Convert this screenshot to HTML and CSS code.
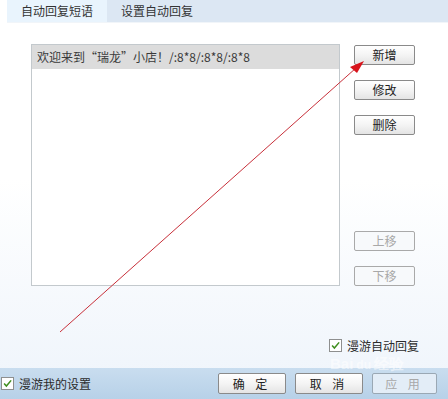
FILE: index.html
```html
<!DOCTYPE html>
<html lang="zh">
<head>
    <meta charset="UTF-8">
    <title>自动回复设置</title>
    <link rel="stylesheet" href="styles.css">
</head>
<body>
    <div class="window">
        <div class="tabs">
            <div class="tab active">自动回复短语</div>
            <div class="tab">设置自动回复</div>
        </div>

        <div class="content">
            <div class="panel">
                <div class="phrase-list">
                    <div class="phrase selected">欢迎来到“瑞龙”小店！/:8*8/:8*8/:8*8</div>
                </div>
                <div class="side-buttons">
                    <button class="btn">新增</button>
                    <button class="btn">修改</button>
                    <button class="btn">删除</button>
                    <button class="btn move-up" disabled>上移</button>
                    <button class="btn" disabled>下移</button>
                </div>
            </div>
            <label class="check roam-reply">
                <span class="box"><svg viewBox="0 0 13 13" width="13" height="13"><path d="M2.5 6.5 L5.2 9.5 L10.8 2.8" fill="none" stroke="#3f8f1f" stroke-width="1.8"/></svg></span>
                漫游自动回复
            </label>
        </div>

        <div class="footer">
            <label class="check">
                <span class="box"><svg viewBox="0 0 13 13" width="13" height="13"><path d="M2.5 6.5 L5.2 9.5 L10.8 2.8" fill="none" stroke="#3f8f1f" stroke-width="1.8"/></svg></span>
                漫游我的设置
            </label>
            <div class="footer-buttons">
                <button class="btn wide">确 定</button>
                <button class="btn wide">取 消</button>
                <button class="btn wide" disabled>应 用</button>
            </div>
        </div>

        <!-- annotation arrow drawn over the dialog -->
        <svg class="arrow" width="448" height="399" viewBox="0 0 448 399">
            <line x1="60" y1="332" x2="356" y2="68" stroke="#c8303a" stroke-width="1"/>
            <path d="M364 61 L350 67 L357 73 Z" fill="#d8141c"/>
        </svg>
        <div class="watermark">Bai<span class="du">du</span>经验</div>
    </div>
</body>
</html>
```

FILE: styles.css
```css
body {
    margin: 0;
    font-family: "Noto Sans CJK SC", "Noto Sans", sans-serif;
    font-size: 12px;
    color: #2b2b2b;
}

.window {
    position: relative;
    width: 448px;
    height: 399px;
    overflow: hidden;
    display: flex;
    flex-direction: column;
    background: linear-gradient(#ffffff 0%, #ffffff 45%, #eef4fb 100%);
}

.tabs {
    display: flex;
    height: 22px;
    margin-left: 7px;
    background: #dce7f3;
    border-bottom: 1px solid #f1f5f9;
}

.tab {
    line-height: 22px;
    padding: 0 14px;
    color: #333;
}

.tab.active {
    width: 72px;
    background: #e9f4fd;
}

.content {
    flex: 1;
    display: flex;
    flex-direction: column;
    padding: 21px 0 0 31px;
}

.panel {
    display: flex;
    gap: 14px;
}

.phrase-list {
    width: 307px;
    height: 240px;
    border: 1px solid #c3c9cd;
    background: #fff;
}

.phrase {
    height: 24px;
    line-height: 24px;
    padding-left: 5px;
    color: #3a3a3a;
}

.phrase.selected {
    background: #dcdcdc;
}

.side-buttons {
    display: flex;
    flex-direction: column;
    gap: 15px;
    padding-top: 1px;
}

.side-buttons .move-up {
    margin-top: 81px;
}

.btn {
    box-sizing: border-box;
    width: 61px;
    height: 20px;
    padding: 0;
    font-family: inherit;
    font-size: 12px;
    line-height: 18px;
    color: #222;
    border: 1px solid #8a8a8a;
    border-radius: 2px;
    background: linear-gradient(#ffffff 0%, #f4f4f4 50%, #e4e4e4 100%);
}

.btn:disabled {
    color: #a8a8a8;
    border-color: #a9a9a9;
    background: #f7f9fb;
}

.check {
    display: flex;
    align-items: center;
    gap: 5px;
    font-size: 12px;
    line-height: 13px;
}

.box {
    width: 11px;
    height: 11px;
    border: 1px solid #8e8f8f;
    background: #fff;
    display: flex;
    align-items: center;
    justify-content: center;
}

.roam-reply {
    align-self: flex-end;
    margin: 53px 29px 0 0;
}

.footer {
    height: 31px;
    flex-shrink: 0;
    display: flex;
    align-items: center;
    justify-content: space-between;
    padding-left: 1px;
    background: linear-gradient(#c9ddef, #b7d1e8);
}

.footer-buttons {
    display: flex;
    gap: 9px;
    padding-right: 11px;
}

.btn.wide {
    width: 68px;
    height: 21px;
    letter-spacing: 4px;
}

.btn.wide:disabled {
    width: 65px;
    background: #e3edf7;
    border-color: #9aa8b4;
}

.arrow {
    position: absolute;
    left: 0;
    top: 0;
    pointer-events: none;
}

.watermark {
    position: absolute;
    left: 330px;
    top: 356px;
    font-family: "Liberation Sans", sans-serif;
    font-size: 15px;
    line-height: 15px;
    font-weight: bold;
    color: rgba(255, 255, 255, 0.55);
    pointer-events: none;
}

.watermark .du {
    font-size: 12px;
    margin: 0 3px;
}
```
